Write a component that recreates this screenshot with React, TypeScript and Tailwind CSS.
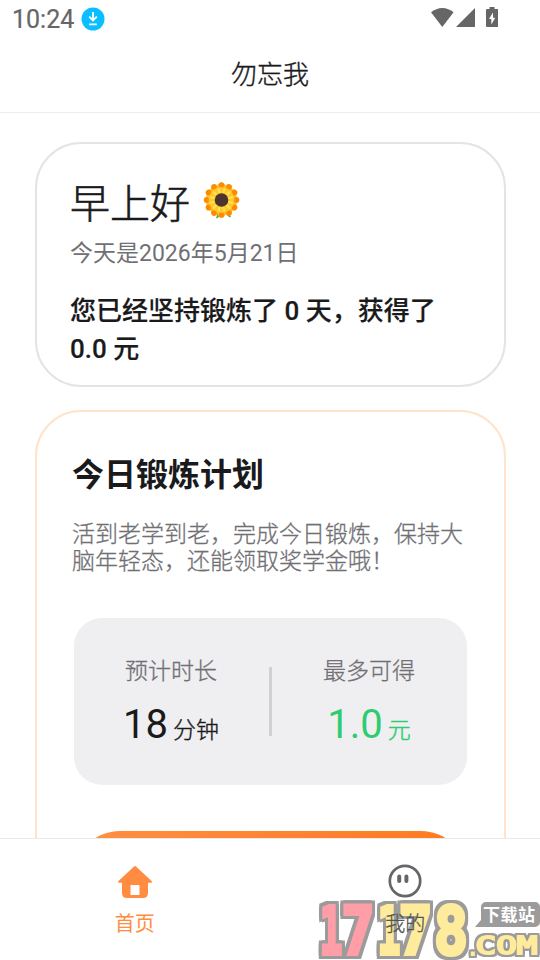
import React from 'react';

const petals = Array.from({ length: 12 }, (_, i) => i * 30);

const StatusBar = () => (
  <div className="flex h-[37px] items-center justify-between pl-3 pr-[42px] text-[#666]">
    <div className="flex items-center gap-[7px]">
      <span className="pt-[3px] text-[25px] leading-[36px] [-webkit-text-stroke:0.2px]">10:24</span>
      <svg className="h-6 w-6" viewBox="0 0 24 24">
        <circle cx="12" cy="12" r="11.5" fill="#0abfff" />
        <path d="M12 5v8.500M8.200 9.700l3.800 3.800 3.800-3.800M8.200 17.300h7.600" fill="none" stroke="#fff" strokeWidth="1.8" />
      </svg>
    </div>
    <svg className="mb-[3px] h-5 w-[67px]" viewBox="0 0 67 20" fill="#666">
      <path d="M0 5.300C3.200 2.600 7.200 1 11.300 1s8.200 1.600 11.300 4.300L11.300 20z" />
      <path d="M44 1v19H25z" />
      <path
        fillRule="evenodd"
        d="M58.500 0h5v2h2.700c.8 0 1.300.5 1.300 1.300v15.400c0 .8-.5 1.300-1.300 1.300H56.300c-.8 0-1.300-.5-1.300-1.300V3.300c0-.8.5-1.300 1.300-1.300h2.200zM62 5.500l-4 6.500h2.300v5.500l4-6.800H62z"
      />
    </svg>
  </div>
);

const Sunflower = () => (
  <svg className="h-[37px] w-[37px]" viewBox="0 0 37 37">
    <path d="M14 31c0 3-.5 4.500-1.500 5.500 2 0 3.500-1 4-3zM23 31c1 3 3 4.300 5 4.200-.5-2-1.500-3.400-3-4.200z" fill="#4caf50" />
    {petals.map((angle) => (
      <g key={angle} transform={`rotate(${angle} 18.5 18)`}>
        <ellipse cx="18.5" cy="6.500" rx="4.600" ry="6" fill="#fdb72b" />
        <ellipse cx="18.5" cy="2.800" rx="2.700" ry="2.600" fill="#fb8c00" />
      </g>
    ))}
    <circle cx="18.5" cy="18" r="12.500" fill="#ffca28" />
    {petals.map((angle) => (
      <ellipse key={angle} cx="18.5" cy="8.500" rx="1.200" ry="3" fill="#ffe056" transform={`rotate(${angle + 15} 18.5 18)`} />
    ))}
    <circle cx="18.5" cy="18" r="6.800" fill="#4e342e" />
  </svg>
);

const HomeIcon = () => (
  <svg className="h-8 w-[34px]" viewBox="0 0 34 32" fill="#ff8c40">
    <path
      fillRule="evenodd"
      d="M16 .5a1.500 1.500 0 0 1 2 0l15.600 14.400c.8.800.3 1.900-.8 1.900H30V27c0 3-1.800 5-4.800 5H8.800C5.800 32 4 30 4 27V16.800H1.300c-1.100 0-1.500-1.100-.8-1.900zM13 19a.5.5 0 0 0-.5.5v9a.5.5 0 0 0 .5.5h8a.5.5 0 0 0 .5-.5v-9a.5.5 0 0 0-.5-.5z"
    />
  </svg>
);

const FaceIcon = () => (
  <svg className="h-[34px] w-[34px]" viewBox="0 0 34 34">
    <circle cx="17" cy="17" r="15.200" fill="none" stroke="#66666a" strokeWidth="2.700" />
    <path d="M11.200 12.500v4.500M18.400 12.500v4.500" stroke="#66666a" strokeWidth="4" strokeLinecap="round" />
  </svg>
);

const digits = [
  { char: '1', x: 319.5, width: 23, fill: '#ff9ea6' },
  { char: '7', x: 341.5, width: 33, fill: '#ff9ea6' },
  { char: '1', x: 377.5, width: 23, fill: '#ffeb9c' },
  { char: '7', x: 398.5, width: 34, fill: '#ffeb9c' },
  { char: '8', x: 434, width: 34, fill: '#ffeb9c' },
];

const Watermark = () => (
  <svg className="pointer-events-none absolute right-0 bottom-0 h-[64px] w-[230px]" viewBox="310 896 230 64">
    <g className="[filter:drop-shadow(3px_0_0_#9b9b9b)_drop-shadow(-3px_0_0_#9b9b9b)_drop-shadow(0_3px_0_#9b9b9b)_drop-shadow(0_-3px_0_#9b9b9b)]">
      {digits.map((d) => (
        <text
          key={d.x}
          x={d.x}
          y="954"
          fontSize="66"
          textLength={d.width}
          lengthAdjust="spacingAndGlyphs"
          fill={d.fill}
          stroke={d.fill}
          strokeWidth="4"
          className="font-['DejaVu_Sans_Mono',monospace] font-bold"
        >
          {d.char}
        </text>
      ))}
    </g>
    <path d="M486 902h49a5 5 0 0 1 5 5v15a5 5 0 0 1-5 5h-60l6-7v-13a5 5 0 0 1 5-5z" fill="#9b9b9b" />
    <text x="483" y="920.5" fontSize="17" fill="#fff" textLength="52" className="font-['Noto_Sans_CJK_SC',sans-serif] font-bold">
      下载站
    </text>
    <g
      fontSize="24"
      fill="#ffeb9c"
      stroke="#ffeb9c"
      strokeWidth="2"
      className="font-['DejaVu_Sans_Mono',monospace] [filter:drop-shadow(2px_0_0_#9b9b9b)_drop-shadow(-2px_0_0_#9b9b9b)_drop-shadow(0_2px_0_#9b9b9b)_drop-shadow(0_-2px_0_#9b9b9b)]"
    >
      <text x="475.5" y="954" textLength="62" lengthAdjust="spacingAndGlyphs">COM</text>
      <text x="468" y="954.5" fontSize="16">.</text>
    </g>
  </svg>
);

const App = () => {
  return (
    <div className="flex h-[960px] w-[540px] flex-col overflow-hidden bg-white font-['Roboto','Noto_Sans_CJK_SC',sans-serif] text-[#1a1a1c]">
      <StatusBar />
      <header className="flex h-[76px] items-center justify-center border-b border-[#ededed] pt-px text-[26px] leading-none font-light [-webkit-text-stroke:0.4px]">
        勿忘我
      </header>

      <main className="min-h-0 flex-1 overflow-hidden px-[35px] pt-[29px]">
        <section className="h-[245px] w-[471px] rounded-[46px] border-2 border-[#e4e4e5] px-[33px] pt-[36px]">
          <div className="flex h-[50px] items-center gap-[13px]">
            <h1 className="text-[40px] leading-[50px] font-light [-webkit-text-stroke:0.6px]">早上好</h1>
            <div className="pb-2.5">
              <Sunflower />
            </div>
          </div>
          <p className="mt-[7px] text-[23px] leading-[34px] text-[#707074]">今天是2026年5月21日</p>
          <p className="mt-[21px] text-[26px] leading-[38px] font-medium [-webkit-text-stroke:0.2px]">
            您已经坚持锻炼了 0 天，获得了
            <br />
            0.0 元
          </p>
        </section>

        <section className="mt-[23px] h-[560px] w-[471px] rounded-[46px] border-2 border-[#ffe3cb] px-[35px] pt-[43px]">
          <h2 className="text-[32px] leading-10 font-bold">今日锻炼计划</h2>
          <p className="mt-[26px] text-[23px] leading-[27px] font-light whitespace-nowrap text-[#707074] [-webkit-text-stroke:0.3px]">
            活到老学到老，完成今日锻炼，保持大
            <br />
            脑年轻态，还能领取奖学金哦！
          </p>
          <div className="mt-[43px] ml-0.5 flex h-[167px] w-[393px] items-center rounded-[28px] bg-[#efeff1]">
            <div className="flex flex-1 flex-col items-center pt-2 pr-px">
              <span className="text-[23px] leading-[34px] font-light text-[#707074] [-webkit-text-stroke:0.3px]">预计时长</span>
              <div className="mt-[11px] flex items-baseline gap-[5px] leading-[50px]">
                <span className="text-[40px]">18</span>
                <span className="text-[23px] font-light [-webkit-text-stroke:0.4px]">分钟</span>
              </div>
            </div>
            <div className="h-[69px] w-[3px] bg-[#d0d0d2]" />
            <div className="flex flex-1 flex-col items-center pt-2 pr-px">
              <span className="text-[23px] leading-[34px] font-light text-[#707074] [-webkit-text-stroke:0.3px]">最多可得</span>
              <div className="mt-[11px] flex items-baseline gap-[5px] leading-[50px] text-[#2ecc71]">
                <span className="text-[40px]">1.0</span>
                <span className="text-[23px] font-light [-webkit-text-stroke:0.4px]">元</span>
              </div>
            </div>
          </div>
          <div className="mt-[46px] ml-0.5 h-[92px] w-[393px] rounded-[46px] bg-linear-to-r from-[#ff8f42] to-[#ff7a1f]" />
        </section>
      </main>

      <nav className="relative flex h-[122px] shrink-0 border-t border-[#e9e9ea] bg-white">
        <div className="flex flex-1 flex-col items-center pt-[27px] text-[#ff8c40]">
          <HomeIcon />
          <span className="mt-[12px] text-[20px] leading-[28px] text-[#ff8c40]">首页</span>
        </div>
        <div className="flex flex-1 flex-col items-center pt-[25px] pl-px">
          <FaceIcon />
          <span className="relative z-10 mt-[12px] text-[20px] leading-[28px] font-light text-[#55554f] [-webkit-text-stroke:0.3px]">我的</span>
        </div>
        <Watermark />
      </nav>
    </div>
  );
};

export default App;
